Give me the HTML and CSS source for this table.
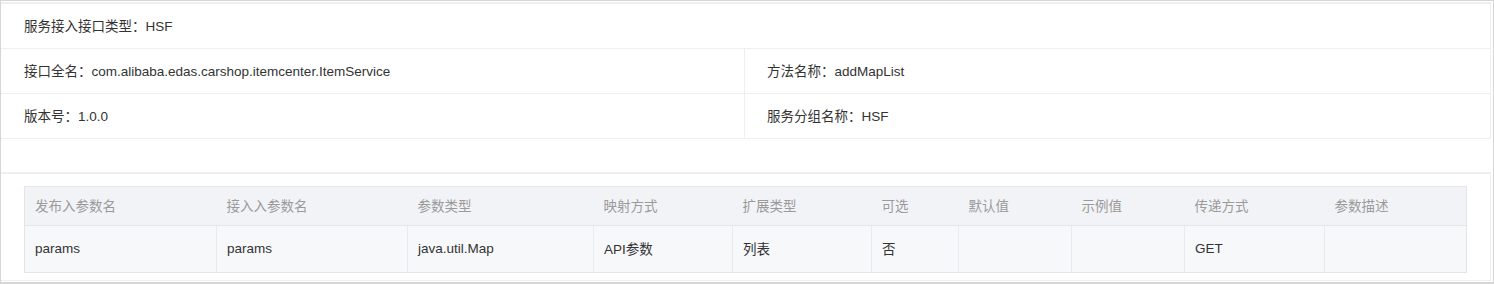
FILE: index.html
```html
<!DOCTYPE html>
<html lang="zh-CN">
<head>
<meta charset="utf-8">
<title>服务详情</title>
<link rel="stylesheet" href="styles.css">
</head>
<body>
<div class="page">
  <div class="info">
    <div class="info-row">
      <div class="info-cell full">服务接入接口类型：HSF</div>
    </div>
    <div class="info-row">
      <div class="info-cell">接口全名：com.alibaba.edas.carshop.itemcenter.ItemService</div>
      <div class="info-cell right">方法名称：addMapList</div>
    </div>
    <div class="info-row last">
      <div class="info-cell">版本号：1.0.0</div>
      <div class="info-cell right">服务分组名称：HSF</div>
    </div>
  </div>
  <div class="spacer"></div>
  <div class="params">
    <table class="ptable">
      <colgroup>
        <col class="c192"><col class="c191"><col class="c186"><col class="c139"><col class="c139">
        <col class="c87"><col class="c113"><col class="c113"><col class="c140"><col class="c142">
      </colgroup>
      <thead>
        <tr>
          <th>发布入参数名</th><th>接入入参数名</th><th>参数类型</th><th>映射方式</th><th>扩展类型</th>
          <th>可选</th><th>默认值</th><th>示例值</th><th>传递方式</th><th>参数描述</th>
        </tr>
      </thead>
      <tbody>
        <tr>
          <td>params</td><td>params</td><td>java.util.Map</td><td>API参数</td><td>列表</td>
          <td>否</td><td></td><td></td><td>GET</td><td></td>
        </tr>
      </tbody>
    </table>
  </div>
</div>
</body>
</html>
```

FILE: styles.css
```css
html, body {
  margin: 0;
  padding: 0;
  background: #ffffff;
}
body {
  font-family: "Liberation Sans", "Noto Sans CJK SC", sans-serif;
  font-size: 13.5px;
  color: #333333;
}
.page {
  box-sizing: border-box;
  width: 1494px;
  height: 284px;
  border: 1px solid #d6d6d6;
  border-bottom-width: 2px;
  padding: 1px 2px 1px 0;
  display: flex;
  flex-direction: column;
}
.info {
  border: 1px solid #efefef;
  border-left: none;
  border-top-width: 2px;
}
.info-row {
  display: flex;
  height: 44px;
  border-bottom: 1px solid #efefef;
}
.info-row.last {
  border-bottom: none;
  height: 44px;
}
.info-cell {
  box-sizing: border-box;
  width: 743px;
  padding-left: 23px;
  padding-bottom: 3px;
  display: flex;
  align-items: center;
}
.info-cell.full {
  width: 100%;
}
.info-cell.right {
  flex: 1;
  border-left: 1px solid #efefef;
  padding-left: 22px;
}
.spacer {
  height: 33px;
}
.params {
  flex: 1;
  border: 1px solid #efefef;
  border-left: none;
  border-top-width: 2px;
  padding: 12px 22px 0 23px;
}
.ptable {
  width: 1442px;
  table-layout: fixed;
  border-collapse: collapse;
  border: 1px solid #e3e5ea;
}
.c192 { width: 192px; }
.c191 { width: 191px; }
.c186 { width: 186px; }
.c139 { width: 139px; }
.c87 { width: 87px; }
.c113 { width: 113px; }
.c140 { width: 140px; }
.c142 { width: 142px; }
.ptable th {
  height: 36px;
  padding: 0 10px 2px;
  background: #f2f3f7;
  color: #9a9a9a;
  font-weight: normal;
  text-align: left;
  border-bottom: 1px solid #e3e5ea;
}
.ptable td {
  height: 44px;
  padding: 0 10px 2px;
  background: #f7f8fa;
  color: #333333;
  border-left: 1px solid #e9eaee;
}
.ptable td:first-child {
  border-left: none;
}
```
